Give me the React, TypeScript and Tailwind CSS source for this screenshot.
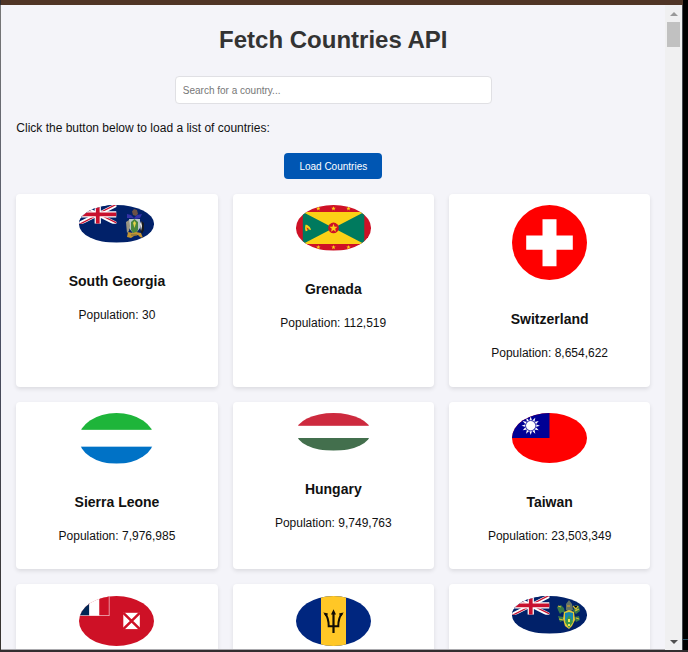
import type { ReactNode } from "react";

function UnionCanton() {
  return (
    <svg x="0" y="0" width="37.5" height="18.75" viewBox="0 0 60 30" preserveAspectRatio="none">
      <rect width="60" height="30" fill="#012169" />
      <path d="M0 0L60 30M60 0L0 30" stroke="#fff" strokeWidth="6" />
      <path d="M0 1.3L30 16M60 28.700L30 14M60 -1.200L30 14M0 31.200L30 16" stroke="#c8102e" strokeWidth="2.2" />
      <path d="M30 0V30M0 15H60" stroke="#fff" strokeWidth="10" />
      <path d="M30 0V30M0 15H60" stroke="#c8102e" strokeWidth="6" />
    </svg>
  );
}

function Flag({ h, className, children }: { h: number; className: string; children: ReactNode }) {
  return (
    <svg viewBox={`0 0 75 ${h}`} preserveAspectRatio="none" className={`block w-[75px] shrink-0 rounded-[50%] ${className}`}>
      {children}
    </svg>
  );
}

const southGeorgia = (
  <Flag h={37.5} className="h-[37.5px]">
    <rect width="75" height="37.5" fill="#012169" />
    <UnionCanton />
    <path d="M53 6.500l2-2.500 3 1 1 4-2 2-3-1z" fill="#6b5146" />
    <path d="M48 9l4 1 3 3 3-3 5-1-2 4-4 1-5-1-4 0z" fill="#3432a8" />
    <path d="M50 14h11v9l-5.500 7-5.500-7z" fill="#b6c4c8" />
    <path d="M52 17l3.500-3 3.500 3v8l-3.500 5-3.500-5z" fill="#49853f" />
    <path d="M54 18l1.500-2 1.500 2-1.500 5z" fill="#e2d34c" />
    <path d="M47 17l3-2 1 6-1 5-2 2-.5-5z" fill="#9c9682" />
    <path d="M62 16l3 2v7l-2 4-2-4 1-3z" fill="#15191f" />
    <path d="M61 19l1-3 1 5-1 5z" fill="#f2f2ef" />
    <path d="M49 27l5 1 3-1 5 1 2 5-3-1-2-2-4 1-3 2-4-1z" fill="#c39331" />
    <path d="M52 30h6" stroke="#6d6b47" />
  </Flag>
);

const STAR = "M0-2.700L.7-.8H2.600L1.100.4 1.600 2.300 0 1.200-1.600 2.300-1.100.4-2.600-.8H-.7Z";

const grenada = (
  <Flag h={45} className="h-[45.5px]">
    <rect width="75" height="45" fill="#ce1126" />
    <rect x="6.800" y="7" width="61.500" height="31.500" fill="#007a5e" />
    <path d="M6.800 7H68.300L6.800 38.500H68.300Z" fill="#fcd116" />
    <circle cx="37.500" cy="22.700" r="5.300" fill="#ce1126" />
    <path d={STAR} fill="#fcd116" transform="translate(37.5 22.800) scale(1.550)" />
    {[22.3, 37.5, 52.5].map((x) => (
      <g key={x} fill="#fcd116">
        <path d={STAR} transform={`translate(${x} 3.500) scale(.85)`} />
        <path d={STAR} transform={`translate(${x} 41.800) scale(.85)`} />
      </g>
    ))}
    <path d="M9.500 19.500c2 0 5 2 5.500 5-1.500.5-2-.5-2.300-1.500-.2 1.800-1.500 2.800-3 3-.8-2-.7-4-.2-6.500z" fill="#fcd116" />
    <path d="M10.500 22l2 1.500-1.200 1.500z" fill="#ce1126" />
  </Flag>
);

const switzerland = (
  <Flag h={75} className="h-[75px]">
    <rect width="75" height="75" fill="#f00" />
    <path d="M30.500 14.300H44.500V30.500H60.800V44.800H44.500V61.300H30.500V44.800H14.200V30.500H30.500Z" fill="#fff" />
  </Flag>
);

const sierraLeone = (
  <Flag h={51} className="h-[50.5px]">
    <rect width="75" height="51" fill="#fff" />
    <rect width="75" height="17" fill="#1eb53a" />
    <rect y="34" width="75" height="17" fill="#0072c6" />
  </Flag>
);

const hungary = (
  <Flag h={37.5} className="h-[37.5px]">
    <rect width="75" height="37.5" fill="#fff" />
    <rect width="75" height="12.800" fill="#cd2a3e" />
    <rect y="25" width="75" height="12.500" fill="#436f4d" />
  </Flag>
);

const taiwan = (
  <Flag h={50} className="h-[50px]">
    <rect width="75" height="50" fill="#f00" />
    <rect width="37.500" height="25" fill="#000095" />
    <g transform="translate(18.700 12.700)">
      {[0, 30, 60, 90, 120, 150, 180, 210, 240, 270, 300, 330].map((a) => (
        <path key={a} d="M-1.400-5L0-9.200 1.400-5Z" fill="#fff" transform={`rotate(${a})`} />
      ))}
      <circle r="5.300" fill="none" stroke="#000095" strokeWidth=".6" />
      <circle r="4.700" fill="#fff" />
    </g>
  </Flag>
);

const wallis = (
  <Flag h={50} className="h-[50px]">
    <rect width="75" height="50" fill="#ce1126" />
    <rect width="30.500" height="20" fill="#f5c9cf" />
    <rect width="10.300" height="19.300" fill="#002654" />
    <rect x="10.300" width="10" height="19.300" fill="#fff" />
    <rect x="20.300" width="9.500" height="19.300" fill="#ce1126" />
    <rect x="44.300" y="16.800" width="16.500" height="16.300" fill="#fff" />
    <path d="M44.300 16.800L60.800 33.100M60.800 16.800L44.300 33.100" stroke="#ce1126" strokeWidth="2.500" />
  </Flag>
);

const barbados = (
  <Flag h={50} className="h-[50px]">
    <rect width="75" height="50" fill="#00267f" />
    <rect x="25" width="25" height="50" fill="#ffc726" />
    <g fill="none" stroke="#100d05">
      <path d="M37.500 17V37" strokeWidth="2.200" />
      <path d="M29 17.500C32 21 32.700 25 32.700 30.200H42.300C42.300 25 43 21 46 17.500" strokeWidth="2" />
    </g>
    <path d="M37.500 13.300L40 18.500H35ZM27.300 16.500L32 17.500 30.500 21ZM47.700 16.500L43 17.500 44.500 21Z" fill="#100d05" />
  </Flag>
);

const pitcairn = (
  <Flag h={37.5} className="h-[37.500px]">
    <rect width="75" height="37.500" fill="#012169" />
    <UnionCanton />
    <path d="M45 11l4-2 3 3 1 5-3-1-2 2-2-4zM63 9l4 1 1 5-4 3-3-3zM62 21l5-1 1 4-4 2zM46 20l5 1 1 3-4 2z" fill="#39784b" />
    <path d="M54 8l3-4 3 4 1 6-4 2-3-2z" fill="#657567" />
    <path d="M46 10l3 1M61 10l3 3 2-3M63 15l4-2M47 23l4 1M64 22l3 1" stroke="#d5be36" strokeWidth="1.200" />
    <path d="M52 16l5-2 5 2 1 8-3 6-3 3-4-3-2-7z" fill="#e0c735" />
    <path d="M53 17l4-1 4 1v7l-4 7-4-7z" fill="#1687b1" />
    <path d="M57 19l4 7-4 6-4-6z" fill="#3c9747" />
    <path d="M56 23h2v3h-2zM56 28h2v2h-2z" fill="#ece75a" />
    <path d="M55 9h3v2h-3z" fill="#a88e42" />
  </Flag>
);

const countries: { id: string; name?: string; population?: string; flag: ReactNode }[] = [
  { id: "gs", name: "South Georgia", population: "30", flag: southGeorgia },
  { id: "gd", name: "Grenada", population: "112,519", flag: grenada },
  { id: "ch", name: "Switzerland", population: "8,654,622", flag: switzerland },
  { id: "sl", name: "Sierra Leone", population: "7,976,985", flag: sierraLeone },
  { id: "hu", name: "Hungary", population: "9,749,763", flag: hungary },
  { id: "tw", name: "Taiwan", population: "23,503,349", flag: taiwan },
  { id: "wf", flag: wallis },
  { id: "bb", flag: barbados },
  { id: "pn", flag: pitcairn },
];

export default function App() {
  return (
    <div className="flex h-[652px] w-[688px] flex-col overflow-hidden bg-[#2f2b2e] font-['Liberation_Sans',Arial,sans-serif] text-[#111]">
      <div className="ml-px h-[5px] w-[682px] shrink-0 bg-[#503526]" />
      <div className="flex h-[645px] shrink-0">
        <div className="w-px shrink-0 bg-linear-to-b from-[#777] via-[#4b5065] to-[#37332f]" />
        <main className="h-[645px] w-[664px] shrink-0 overflow-hidden border-b border-[#aaa9ad] bg-[#f4f4f9] pl-[15.3px] pr-[14.700px]">
          <h1 className="mt-[21px] text-center text-[24px] leading-[28px] font-bold text-[#333]">Fetch Countries API</h1>
          <input
            placeholder="Search for a country..."
            className="mx-auto mt-[22px] block h-7 w-[317px] rounded-[4px] border border-[#e0e0e4] bg-white px-[7px] text-[10px] outline-none placeholder:text-[#777]"
          />
          <p className="mt-[17px] text-[12px] leading-[14px]">Click the button below to load a list of countries:</p>
          <button className="mx-auto mt-[18px] block h-[26px] w-[98px] rounded-[4px] bg-[#0056b3] text-[10px] text-white">
            Load Countries
          </button>
          <section className="mt-[15px] grid grid-cols-3 grid-rows-[193px_167px_193px] gap-x-[15px] gap-y-[15px]">
            {countries.map((country) => (
              <article key={country.id} className="flex flex-col items-center overflow-hidden rounded-[4px] bg-white pt-[11px] shadow-[0_2px_4px_rgba(0,0,0,0.1)] nth-[n+7]:pt-3">
                {country.flag}
                {country.name && (
                  <>
                    <h3 className="mt-[30.5px] text-[14px] leading-4 font-bold">{country.name}</h3>
                    <p className="mt-[19px] text-[12px] leading-[14px]">Population: {country.population}</p>
                  </>
                )}
              </article>
            ))}
          </section>
        </main>
        <aside className="flex w-[17px] shrink-0 flex-col items-center bg-[#f0f0f1]">
          <svg className="mt-[7px] h-[4px] w-[8px] shrink-0" viewBox="0 0 8 4"><path d="M0 4L4 0L8 4Z" fill="#999" /></svg>
          <div className="mt-[6px] h-[25px] w-[13px] shrink-0 bg-[#c1c1c1]" />
          <svg className="mt-auto mb-[6px] h-[4px] w-[8px] shrink-0" viewBox="0 0 8 4"><path d="M0 0H8L4 4Z" fill="#505050" /></svg>
        </aside>
        <div className="w-px shrink-0 bg-[#45484d]" />
        <div className="-mt-[5px] flex w-[5px] shrink-0 flex-col bg-black">
          <div className="mt-[639px] h-px bg-[#2b5063]" />
        </div>
      </div>
      <div className="h-[2px] w-[682px] bg-[#332e30]" />
    </div>
  );
}
